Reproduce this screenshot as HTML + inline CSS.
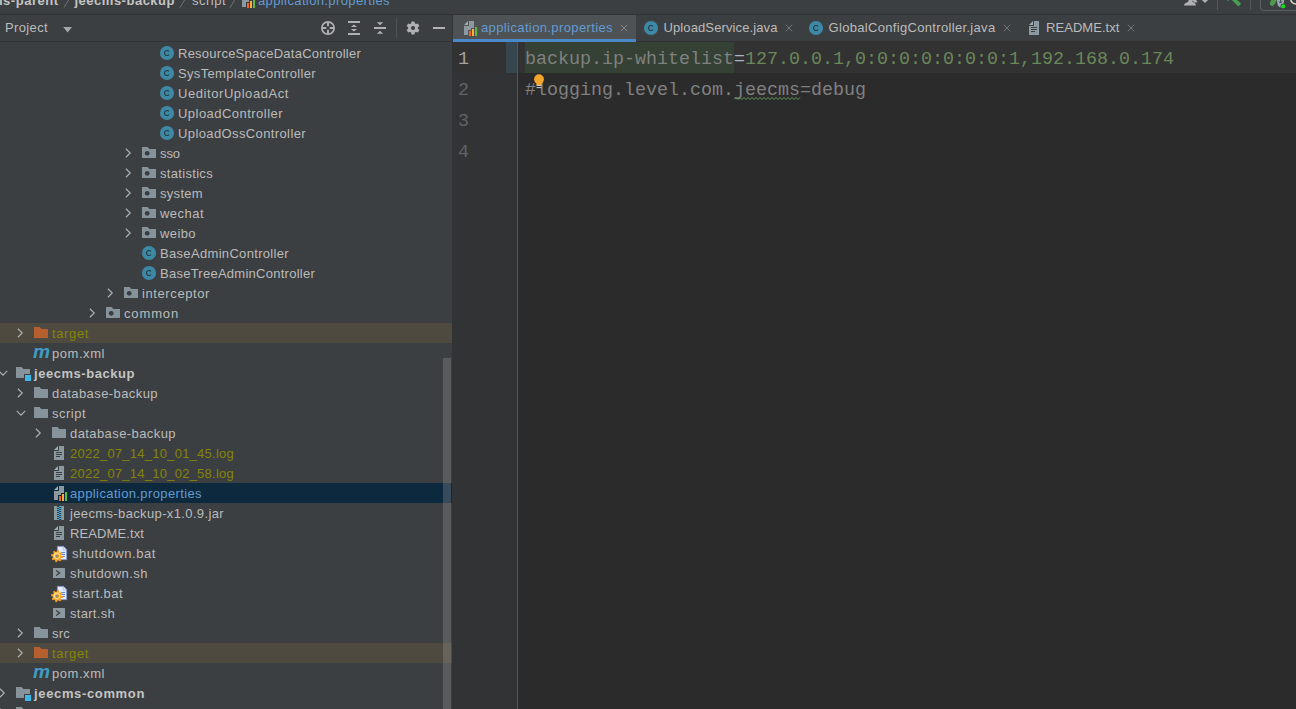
<!DOCTYPE html>
<html><head><meta charset="utf-8"><title>IDE</title>
<style>
html,body{margin:0;padding:0}
body{width:1296px;height:709px;overflow:hidden;background:#3c3f41;position:relative;font-family:"Liberation Sans",sans-serif;font-size:13px}
.t{position:absolute;white-space:pre;font-family:"Liberation Sans",sans-serif}
.m{position:absolute;white-space:pre;font-family:"Liberation Mono",monospace;font-size:18.333px;height:31px;line-height:31px;letter-spacing:0}
.i{position:absolute;overflow:visible;display:block}
.r{position:absolute;left:0;width:452px;height:20px}
#left{position:absolute;left:0;top:15px;width:452px;height:694px;background:#3c3f41;overflow:hidden}
#wrap{position:absolute;left:0;top:0;width:1296px;height:709px;overflow:hidden}
</style></head><body><div id="wrap">
<!-- editor area -->
<div style="position:absolute;left:452px;top:42px;width:844px;height:667px;background:#2b2b2b"></div>
<div style="position:absolute;left:452px;top:42px;width:65px;height:667px;background:#313335"></div>
<div style="position:absolute;left:517px;top:42px;width:1px;height:667px;background:#555555"></div>
<!-- top nav border -->
<div style="position:absolute;left:0;top:14px;width:1296px;height:1px;background:#2f3133"></div>
<!-- project toolbar border -->
<div style="position:absolute;left:0;top:41px;width:452px;height:1px;background:#323436"></div>
<div style="position:absolute;left:452px;top:15px;width:1px;height:27px;background:#323436"></div>
<!-- tab bar bottom border -->
<div style="position:absolute;left:453px;top:41px;width:843px;height:1px;background:#323232"></div>
<div class="t" style="left:-36.3px;top:-9.5px;height:20px;line-height:20px;font-size:13px;color:#c4c4c4;letter-spacing:0.511px;font-weight:bold;">jeecms-parent</div>
<div class="t" style="left:74.5px;top:-9.5px;height:20px;line-height:20px;font-size:13px;color:#c4c4c4;letter-spacing:0.505px;font-weight:bold;">jeecms-backup</div>
<div class="t" style="left:192px;top:-9.5px;height:20px;line-height:20px;font-size:13px;color:#bbbbbb;letter-spacing:0.490px;">script</div>
<div class="t" style="left:258px;top:-9.5px;height:20px;line-height:20px;font-size:13px;color:#629cd2;letter-spacing:0.383px;">application.properties</div>
<svg class="i" style="left:62.9px;top:-4px;" width="10" height="12" viewBox="0 0 10 12"><path d="M1 11.6 L8.03 0" stroke="#6f7375" stroke-width="1" fill="none"/></svg>
<svg class="i" style="left:179.4px;top:-4px;" width="10" height="12" viewBox="0 0 10 12"><path d="M1 11.6 L8.03 0" stroke="#6f7375" stroke-width="1" fill="none"/></svg>
<svg class="i" style="left:229.1px;top:-4px;" width="10" height="12" viewBox="0 0 10 12"><path d="M1 11.6 L8.03 0" stroke="#6f7375" stroke-width="1" fill="none"/></svg>
<svg class="i" style="left:242px;top:-7px;" width="14" height="16" viewBox="0 0 14 16"><path d="M5 0 H10 V14 H0 V5 H5 Z" fill="#8c99a1"/><path d="M4 0 V4 H0 Z" fill="#9eabb3"/><rect x="4" y="9" width="4" height="7" fill="#3c3f41"/><rect x="7" y="7" width="7" height="9" fill="#3c3f41"/><rect x="10" y="5" width="4" height="11" fill="#3c3f41"/><rect x="5" y="10" width="2" height="5" fill="#f26522"/><rect x="8" y="8" width="2" height="7" fill="#fbb03b"/><rect x="11" y="6" width="2.1" height="9" fill="#62b543"/></svg>
<div class="t" style="left:5px;top:18px;height:20px;line-height:20px;font-size:13px;color:#bbbbbb;letter-spacing:0.362px;">Project</div>
<svg class="i" style="left:63.3px;top:26.7px;" width="10" height="6" viewBox="0 0 10 6"><path d="M0.2 0 H9 L4.6 5.6 Z" fill="#a5a8aa"/></svg>
<svg class="i" style="left:321px;top:21px;" width="14" height="14" viewBox="0 0 14 14"><circle cx="7" cy="7" r="6.15" fill="none" stroke="#afb1b3" stroke-width="1.7"/><path d="M7 1 V5.3 M7 8.7 V13 M1 7 H5.3 M8.7 7 H13" stroke="#afb1b3" stroke-width="1.9"/></svg>
<svg class="i" style="left:348px;top:21px;" width="12" height="14" viewBox="0 0 12 14"><rect x="0" y="0" width="12" height="2" fill="#afb1b3"/><rect x="0" y="12" width="12" height="2" fill="#afb1b3"/><path d="M6 3.5 L9.1 6.1 H2.9 Z M6 10.5 L9.1 7.9 H2.9 Z" fill="#afb1b3"/></svg>
<svg class="i" style="left:374px;top:21px;" width="12" height="14" viewBox="0 0 12 14"><rect x="0" y="6" width="12" height="2" fill="#afb1b3"/><path d="M6 4.3 L9.2 1.3 H2.8 Z M6 9.7 L9.2 12.7 H2.8 Z" fill="#afb1b3"/></svg>
<div style="position:absolute;left:396px;top:18px;width:1px;height:20px;background:#515456"></div>
<svg class="i" style="left:406px;top:21px;" width="14" height="14" viewBox="0 0 14 14"><g transform="translate(7 7)"><path d="M-1.9 -4 L-1.45 -6.5 H1.45 L1.9 -4 Z" fill="#afb1b3" transform="rotate(0)"/><path d="M-1.9 -4 L-1.45 -6.5 H1.45 L1.9 -4 Z" fill="#afb1b3" transform="rotate(60)"/><path d="M-1.9 -4 L-1.45 -6.5 H1.45 L1.9 -4 Z" fill="#afb1b3" transform="rotate(120)"/><path d="M-1.9 -4 L-1.45 -6.5 H1.45 L1.9 -4 Z" fill="#afb1b3" transform="rotate(180)"/><path d="M-1.9 -4 L-1.45 -6.5 H1.45 L1.9 -4 Z" fill="#afb1b3" transform="rotate(240)"/><path d="M-1.9 -4 L-1.45 -6.5 H1.45 L1.9 -4 Z" fill="#afb1b3" transform="rotate(300)"/><circle r="4.9" fill="#afb1b3"/><circle r="2.05" fill="#3c3f41"/></g></svg>
<div style="position:absolute;left:433px;top:26.5px;width:12px;height:2px;background:#afb1b3"></div>
<svg class="i" style="left:160px;top:46px;" width="14" height="14" viewBox="0 0 14 14"><circle cx="7" cy="7" r="7.05" fill="#3d88a5"/><path d="M9.0 8.7 A2.55 2.55 0 1 1 9.0 5.3" fill="none" stroke="#263a44" stroke-width="1.1"/></svg>
<div class="t" style="left:178px;top:44px;height:20px;line-height:20px;font-size:13px;color:#bbbbbb;letter-spacing:0.248px;">ResourceSpaceDataController</div>
<svg class="i" style="left:160px;top:66px;" width="14" height="14" viewBox="0 0 14 14"><circle cx="7" cy="7" r="7.05" fill="#3d88a5"/><path d="M9.0 8.7 A2.55 2.55 0 1 1 9.0 5.3" fill="none" stroke="#263a44" stroke-width="1.1"/></svg>
<div class="t" style="left:178px;top:64px;height:20px;line-height:20px;font-size:13px;color:#bbbbbb;letter-spacing:0.344px;">SysTemplateController</div>
<svg class="i" style="left:160px;top:86px;" width="14" height="14" viewBox="0 0 14 14"><circle cx="7" cy="7" r="7.05" fill="#3d88a5"/><path d="M9.0 8.7 A2.55 2.55 0 1 1 9.0 5.3" fill="none" stroke="#263a44" stroke-width="1.1"/></svg>
<div class="t" style="left:178px;top:84px;height:20px;line-height:20px;font-size:13px;color:#bbbbbb;letter-spacing:0.569px;">UeditorUploadAct</div>
<svg class="i" style="left:160px;top:106px;" width="14" height="14" viewBox="0 0 14 14"><circle cx="7" cy="7" r="7.05" fill="#3d88a5"/><path d="M9.0 8.7 A2.55 2.55 0 1 1 9.0 5.3" fill="none" stroke="#263a44" stroke-width="1.1"/></svg>
<div class="t" style="left:178px;top:104px;height:20px;line-height:20px;font-size:13px;color:#bbbbbb;letter-spacing:0.465px;">UploadController</div>
<svg class="i" style="left:160px;top:126px;" width="14" height="14" viewBox="0 0 14 14"><circle cx="7" cy="7" r="7.05" fill="#3d88a5"/><path d="M9.0 8.7 A2.55 2.55 0 1 1 9.0 5.3" fill="none" stroke="#263a44" stroke-width="1.1"/></svg>
<div class="t" style="left:178px;top:124px;height:20px;line-height:20px;font-size:13px;color:#bbbbbb;letter-spacing:0.386px;">UploadOssController</div>
<svg class="i" style="left:124.3px;top:146.5px;" width="8" height="12" viewBox="0 0 8 12"><path d="M1.9 1.8 L6.2 6 L1.9 10.2" fill="none" stroke="#adb0b2" stroke-width="1.2"/></svg>
<svg class="i" style="left:142px;top:147px;" width="14" height="11" viewBox="0 0 14 11"><path d="M0 0 H5.6 L7.4 2 H14 V11 H0 Z" fill="#87939a"/><circle cx="5.2" cy="6.3" r="2.4" fill="#3a3d3f"/></svg>
<div class="t" style="left:160px;top:144px;height:20px;line-height:20px;font-size:13px;color:#bbbbbb;letter-spacing:-0.078px;">sso</div>
<svg class="i" style="left:124.3px;top:166.5px;" width="8" height="12" viewBox="0 0 8 12"><path d="M1.9 1.8 L6.2 6 L1.9 10.2" fill="none" stroke="#adb0b2" stroke-width="1.2"/></svg>
<svg class="i" style="left:142px;top:167px;" width="14" height="11" viewBox="0 0 14 11"><path d="M0 0 H5.6 L7.4 2 H14 V11 H0 Z" fill="#87939a"/><circle cx="5.2" cy="6.3" r="2.4" fill="#3a3d3f"/></svg>
<div class="t" style="left:160px;top:164px;height:20px;line-height:20px;font-size:13px;color:#bbbbbb;letter-spacing:0.316px;">statistics</div>
<svg class="i" style="left:124.3px;top:186.5px;" width="8" height="12" viewBox="0 0 8 12"><path d="M1.9 1.8 L6.2 6 L1.9 10.2" fill="none" stroke="#adb0b2" stroke-width="1.2"/></svg>
<svg class="i" style="left:142px;top:187px;" width="14" height="11" viewBox="0 0 14 11"><path d="M0 0 H5.6 L7.4 2 H14 V11 H0 Z" fill="#87939a"/><circle cx="5.2" cy="6.3" r="2.4" fill="#3a3d3f"/></svg>
<div class="t" style="left:160px;top:184px;height:20px;line-height:20px;font-size:13px;color:#bbbbbb;letter-spacing:0.305px;">system</div>
<svg class="i" style="left:124.3px;top:206.5px;" width="8" height="12" viewBox="0 0 8 12"><path d="M1.9 1.8 L6.2 6 L1.9 10.2" fill="none" stroke="#adb0b2" stroke-width="1.2"/></svg>
<svg class="i" style="left:142px;top:207px;" width="14" height="11" viewBox="0 0 14 11"><path d="M0 0 H5.6 L7.4 2 H14 V11 H0 Z" fill="#87939a"/><circle cx="5.2" cy="6.3" r="2.4" fill="#3a3d3f"/></svg>
<div class="t" style="left:160px;top:204px;height:20px;line-height:20px;font-size:13px;color:#bbbbbb;letter-spacing:0.466px;">wechat</div>
<svg class="i" style="left:124.3px;top:226.5px;" width="8" height="12" viewBox="0 0 8 12"><path d="M1.9 1.8 L6.2 6 L1.9 10.2" fill="none" stroke="#adb0b2" stroke-width="1.2"/></svg>
<svg class="i" style="left:142px;top:227px;" width="14" height="11" viewBox="0 0 14 11"><path d="M0 0 H5.6 L7.4 2 H14 V11 H0 Z" fill="#87939a"/><circle cx="5.2" cy="6.3" r="2.4" fill="#3a3d3f"/></svg>
<div class="t" style="left:160px;top:224px;height:20px;line-height:20px;font-size:13px;color:#bbbbbb;letter-spacing:0.406px;">weibo</div>
<svg class="i" style="left:142px;top:246px;" width="14" height="14" viewBox="0 0 14 14"><circle cx="7" cy="7" r="7.05" fill="#3d88a5"/><path d="M9.0 8.7 A2.55 2.55 0 1 1 9.0 5.3" fill="none" stroke="#263a44" stroke-width="1.1"/></svg>
<div class="t" style="left:160px;top:244px;height:20px;line-height:20px;font-size:13px;color:#bbbbbb;letter-spacing:0.324px;">BaseAdminController</div>
<svg class="i" style="left:142px;top:266px;" width="14" height="14" viewBox="0 0 14 14"><circle cx="7" cy="7" r="7.05" fill="#3d88a5"/><path d="M9.0 8.7 A2.55 2.55 0 1 1 9.0 5.3" fill="none" stroke="#263a44" stroke-width="1.1"/></svg>
<div class="t" style="left:160px;top:264px;height:20px;line-height:20px;font-size:13px;color:#bbbbbb;letter-spacing:0.257px;">BaseTreeAdminController</div>
<svg class="i" style="left:106.3px;top:286.5px;" width="8" height="12" viewBox="0 0 8 12"><path d="M1.9 1.8 L6.2 6 L1.9 10.2" fill="none" stroke="#adb0b2" stroke-width="1.2"/></svg>
<svg class="i" style="left:124px;top:287px;" width="14" height="11" viewBox="0 0 14 11"><path d="M0 0 H5.6 L7.4 2 H14 V11 H0 Z" fill="#87939a"/><circle cx="5.2" cy="6.3" r="2.4" fill="#3a3d3f"/></svg>
<div class="t" style="left:142px;top:284px;height:20px;line-height:20px;font-size:13px;color:#bbbbbb;letter-spacing:0.598px;">interceptor</div>
<svg class="i" style="left:88.3px;top:306.5px;" width="8" height="12" viewBox="0 0 8 12"><path d="M1.9 1.8 L6.2 6 L1.9 10.2" fill="none" stroke="#adb0b2" stroke-width="1.2"/></svg>
<svg class="i" style="left:106px;top:307px;" width="14" height="11" viewBox="0 0 14 11"><path d="M0 0 H5.6 L7.4 2 H14 V11 H0 Z" fill="#87939a"/><circle cx="5.2" cy="6.3" r="2.4" fill="#3a3d3f"/></svg>
<div class="t" style="left:124px;top:304px;height:20px;line-height:20px;font-size:13px;color:#bbbbbb;letter-spacing:0.857px;">common</div>
<div class="r" style="top:323px;background:#4e4a40"></div>
<svg class="i" style="left:16.3px;top:326.5px;" width="8" height="12" viewBox="0 0 8 12"><path d="M1.9 1.8 L6.2 6 L1.9 10.2" fill="none" stroke="#adb0b2" stroke-width="1.2"/></svg>
<svg class="i" style="left:34px;top:327px;" width="14" height="11" viewBox="0 0 14 11"><path d="M0 0 H5.6 L7.4 2 H14 V11 H0 Z" fill="#b5602e"/></svg>
<div class="t" style="left:52px;top:324px;height:20px;line-height:20px;font-size:13px;color:#848504;letter-spacing:0.625px;">target</div>
<svg class="i" style="left:32px;top:343px;" width="20" height="20" viewBox="0 0 20 20"><text x="1.0" y="15" font-family="Liberation Sans" font-size="19.2" font-weight="bold" font-style="italic" fill="#3f9cc4">m</text></svg>
<div class="t" style="left:52px;top:344px;height:20px;line-height:20px;font-size:13px;color:#bbbbbb;letter-spacing:0.554px;">pom.xml</div>
<svg class="i" style="left:-3px;top:368.5px;" width="12" height="8" viewBox="0 0 12 8"><path d="M1.8 1.9 L6 6.2 L10.2 1.9" fill="none" stroke="#adb0b2" stroke-width="1.2"/></svg>
<svg class="i" style="left:16px;top:367px;" width="16" height="15" viewBox="0 0 16 15"><path d="M0 0 H5.6 L7.4 2 H14 V11 H0 Z" fill="#87939a"/><rect x="8" y="7" width="8" height="8" fill="#3c3f41"/><rect x="9" y="8" width="6.1" height="6" fill="#40b6e8"/></svg>
<div class="t" style="left:34px;top:364px;height:20px;line-height:20px;font-size:13px;color:#c4c4c4;letter-spacing:0.543px;font-weight:bold;">jeecms-backup</div>
<svg class="i" style="left:16.3px;top:386.5px;" width="8" height="12" viewBox="0 0 8 12"><path d="M1.9 1.8 L6.2 6 L1.9 10.2" fill="none" stroke="#adb0b2" stroke-width="1.2"/></svg>
<svg class="i" style="left:34px;top:387px;" width="14" height="11" viewBox="0 0 14 11"><path d="M0 0 H5.6 L7.4 2 H14 V11 H0 Z" fill="#87939a"/></svg>
<div class="t" style="left:52px;top:384px;height:20px;line-height:20px;font-size:13px;color:#bbbbbb;letter-spacing:0.417px;">database-backup</div>
<svg class="i" style="left:14.5px;top:408.5px;" width="12" height="8" viewBox="0 0 12 8"><path d="M1.8 1.9 L6 6.2 L10.2 1.9" fill="none" stroke="#adb0b2" stroke-width="1.2"/></svg>
<svg class="i" style="left:34px;top:407px;" width="14" height="11" viewBox="0 0 14 11"><path d="M0 0 H5.6 L7.4 2 H14 V11 H0 Z" fill="#87939a"/></svg>
<div class="t" style="left:52px;top:404px;height:20px;line-height:20px;font-size:13px;color:#bbbbbb;letter-spacing:0.490px;">script</div>
<svg class="i" style="left:34.3px;top:426.5px;" width="8" height="12" viewBox="0 0 8 12"><path d="M1.9 1.8 L6.2 6 L1.9 10.2" fill="none" stroke="#adb0b2" stroke-width="1.2"/></svg>
<svg class="i" style="left:52px;top:427px;" width="14" height="11" viewBox="0 0 14 11"><path d="M0 0 H5.6 L7.4 2 H14 V11 H0 Z" fill="#87939a"/></svg>
<div class="t" style="left:70px;top:424px;height:20px;line-height:20px;font-size:13px;color:#bbbbbb;letter-spacing:0.417px;">database-backup</div>
<svg class="i" style="left:54px;top:446px;" width="10" height="14" viewBox="0 0 10 14"><path d="M5 0 H10 V14 H0 V5 H5 Z" fill="#8c99a1"/><path d="M4 0 V4 H0 Z" fill="#9eabb3"/><rect x="2" y="6" width="6" height="1" fill="#3c3f41"/><rect x="2" y="8" width="6" height="1" fill="#3c3f41"/><rect x="2" y="10" width="4" height="1" fill="#3c3f41"/></svg>
<div class="t" style="left:70px;top:444px;height:20px;line-height:20px;font-size:13px;color:#848504;letter-spacing:0.246px;">2022_07_14_10_01_45.log</div>
<svg class="i" style="left:54px;top:466px;" width="10" height="14" viewBox="0 0 10 14"><path d="M5 0 H10 V14 H0 V5 H5 Z" fill="#8c99a1"/><path d="M4 0 V4 H0 Z" fill="#9eabb3"/><rect x="2" y="6" width="6" height="1" fill="#3c3f41"/><rect x="2" y="8" width="6" height="1" fill="#3c3f41"/><rect x="2" y="10" width="4" height="1" fill="#3c3f41"/></svg>
<div class="t" style="left:70px;top:464px;height:20px;line-height:20px;font-size:13px;color:#848504;letter-spacing:0.246px;">2022_07_14_10_02_58.log</div>
<div class="r" style="top:483px;background:#0d293e"></div>
<svg class="i" style="left:54px;top:486px;" width="14" height="16" viewBox="0 0 14 16"><path d="M5 0 H10 V14 H0 V5 H5 Z" fill="#8c99a1"/><path d="M4 0 V4 H0 Z" fill="#9eabb3"/><rect x="4" y="9" width="4" height="7" fill="#0d293e"/><rect x="7" y="7" width="7" height="9" fill="#0d293e"/><rect x="10" y="5" width="4" height="11" fill="#0d293e"/><rect x="5" y="10" width="2" height="5" fill="#f26522"/><rect x="8" y="8" width="2" height="7" fill="#fbb03b"/><rect x="11" y="6" width="2.1" height="9" fill="#62b543"/></svg>
<div class="t" style="left:70px;top:484px;height:20px;line-height:20px;font-size:13px;color:#629cd2;letter-spacing:0.383px;">application.properties</div>
<svg class="i" style="left:54px;top:506px;" width="10" height="14" viewBox="0 0 10 14"><rect x="0" y="0" width="10" height="14" fill="#8c99a1"/><rect x="3" y="0" width="4.1" height="14" fill="#35383a"/><rect x="5" y="0" width="2.05" height="1" fill="#3fb4e0"/><rect x="3" y="1" width="2.05" height="1" fill="#3fb4e0"/><rect x="5" y="2" width="2.05" height="1" fill="#3fb4e0"/><rect x="3" y="3" width="2.05" height="1" fill="#3fb4e0"/><rect x="5" y="4" width="2.05" height="1" fill="#3fb4e0"/><rect x="3" y="5" width="2.05" height="1" fill="#3fb4e0"/><rect x="5" y="6" width="2.05" height="1" fill="#3fb4e0"/><rect x="3" y="7" width="2.05" height="1" fill="#3fb4e0"/><rect x="5" y="8" width="2.05" height="1" fill="#3fb4e0"/><rect x="3" y="9" width="2.05" height="1" fill="#3fb4e0"/><rect x="5" y="10" width="2.05" height="1" fill="#3fb4e0"/><rect x="3" y="11" width="2.05" height="1" fill="#3fb4e0"/><rect x="5" y="12" width="2.05" height="1" fill="#3fb4e0"/><rect x="3" y="13" width="2.05" height="1" fill="#3fb4e0"/></svg>
<div class="t" style="left:70px;top:504px;height:20px;line-height:20px;font-size:13px;color:#bbbbbb;letter-spacing:0.365px;">jeecms-backup-x1.0.9.jar</div>
<svg class="i" style="left:54px;top:526px;" width="10" height="14" viewBox="0 0 10 14"><path d="M5 0 H10 V14 H0 V5 H5 Z" fill="#8c99a1"/><path d="M4 0 V4 H0 Z" fill="#9eabb3"/><rect x="2" y="6" width="6" height="1" fill="#3c3f41"/><rect x="2" y="8" width="6" height="1" fill="#3c3f41"/><rect x="2" y="10" width="4" height="1" fill="#3c3f41"/></svg>
<div class="t" style="left:70px;top:524px;height:20px;line-height:20px;font-size:13px;color:#bbbbbb;letter-spacing:0.103px;">README.txt</div>
<svg class="i" style="left:51px;top:545px;" width="18" height="18" viewBox="0 0 18 18"><defs><linearGradient id="gg" x1="0" y1="0" x2="1" y2="1"><stop offset="0" stop-color="#ffd257"/><stop offset="1" stop-color="#f39314"/></linearGradient></defs><path d="M6.3 1.3 H12.4 L15.7 4.6 V14.7 H6.3 Z" fill="#e4edff" stroke="#6d83c8" stroke-width=".7"/><path d="M12.2 1.5 V4.8 H15.5 Z" fill="#f4f7ff" stroke="#7a8fd0" stroke-width=".5"/><rect x="10.4" y="6.9" width="3.8" height="1" fill="#5a7ad6"/><rect x="10.4" y="8.9" width="3.8" height="1" fill="#5a7ad6"/><rect x="10.4" y="10.9" width="3.4" height="1" fill="#5a7ad6"/><g transform="translate(6.1 11.1)"><path d="M-1.25 -3.6 L-0.95 -6 H0.95 L1.25 -3.6 Z" fill="#f6a21e" transform="rotate(10)"/><path d="M-1.25 -3.6 L-0.95 -6 H0.95 L1.25 -3.6 Z" fill="#f6a21e" transform="rotate(55)"/><path d="M-1.25 -3.6 L-0.95 -6 H0.95 L1.25 -3.6 Z" fill="#f6a21e" transform="rotate(100)"/><path d="M-1.25 -3.6 L-0.95 -6 H0.95 L1.25 -3.6 Z" fill="#f6a21e" transform="rotate(145)"/><path d="M-1.25 -3.6 L-0.95 -6 H0.95 L1.25 -3.6 Z" fill="#f6a21e" transform="rotate(190)"/><path d="M-1.25 -3.6 L-0.95 -6 H0.95 L1.25 -3.6 Z" fill="#f6a21e" transform="rotate(235)"/><path d="M-1.25 -3.6 L-0.95 -6 H0.95 L1.25 -3.6 Z" fill="#f6a21e" transform="rotate(280)"/><path d="M-1.25 -3.6 L-0.95 -6 H0.95 L1.25 -3.6 Z" fill="#f6a21e" transform="rotate(325)"/><circle r="4.3" fill="url(#gg)"/><circle r="2.7" fill="none" stroke="#ffe9a8" stroke-width=".9"/><circle r="1.6" fill="#c07a1a"/><circle r="0.9" fill="#7f9be0"/></g></svg>
<div class="t" style="left:72px;top:544px;height:20px;line-height:20px;font-size:13px;color:#bbbbbb;letter-spacing:0.555px;">shutdown.bat</div>
<svg class="i" style="left:53px;top:568px;" width="12" height="10" viewBox="0 0 12 10"><rect x="0" y="0" width="12" height="10" rx="0.3" fill="#8c99a1"/><path d="M3.1 2.5 L6.6 5 L3.1 7.5" fill="none" stroke="#3c3f41" stroke-width="1.4"/></svg>
<div class="t" style="left:70px;top:564px;height:20px;line-height:20px;font-size:13px;color:#bbbbbb;letter-spacing:0.455px;">shutdown.sh</div>
<svg class="i" style="left:51px;top:585px;" width="18" height="18" viewBox="0 0 18 18"><defs><linearGradient id="gg" x1="0" y1="0" x2="1" y2="1"><stop offset="0" stop-color="#ffd257"/><stop offset="1" stop-color="#f39314"/></linearGradient></defs><path d="M6.3 1.3 H12.4 L15.7 4.6 V14.7 H6.3 Z" fill="#e4edff" stroke="#6d83c8" stroke-width=".7"/><path d="M12.2 1.5 V4.8 H15.5 Z" fill="#f4f7ff" stroke="#7a8fd0" stroke-width=".5"/><rect x="10.4" y="6.9" width="3.8" height="1" fill="#5a7ad6"/><rect x="10.4" y="8.9" width="3.8" height="1" fill="#5a7ad6"/><rect x="10.4" y="10.9" width="3.4" height="1" fill="#5a7ad6"/><g transform="translate(6.1 11.1)"><path d="M-1.25 -3.6 L-0.95 -6 H0.95 L1.25 -3.6 Z" fill="#f6a21e" transform="rotate(10)"/><path d="M-1.25 -3.6 L-0.95 -6 H0.95 L1.25 -3.6 Z" fill="#f6a21e" transform="rotate(55)"/><path d="M-1.25 -3.6 L-0.95 -6 H0.95 L1.25 -3.6 Z" fill="#f6a21e" transform="rotate(100)"/><path d="M-1.25 -3.6 L-0.95 -6 H0.95 L1.25 -3.6 Z" fill="#f6a21e" transform="rotate(145)"/><path d="M-1.25 -3.6 L-0.95 -6 H0.95 L1.25 -3.6 Z" fill="#f6a21e" transform="rotate(190)"/><path d="M-1.25 -3.6 L-0.95 -6 H0.95 L1.25 -3.6 Z" fill="#f6a21e" transform="rotate(235)"/><path d="M-1.25 -3.6 L-0.95 -6 H0.95 L1.25 -3.6 Z" fill="#f6a21e" transform="rotate(280)"/><path d="M-1.25 -3.6 L-0.95 -6 H0.95 L1.25 -3.6 Z" fill="#f6a21e" transform="rotate(325)"/><circle r="4.3" fill="url(#gg)"/><circle r="2.7" fill="none" stroke="#ffe9a8" stroke-width=".9"/><circle r="1.6" fill="#c07a1a"/><circle r="0.9" fill="#7f9be0"/></g></svg>
<div class="t" style="left:72px;top:584px;height:20px;line-height:20px;font-size:13px;color:#bbbbbb;letter-spacing:0.448px;">start.bat</div>
<svg class="i" style="left:53px;top:608px;" width="12" height="10" viewBox="0 0 12 10"><rect x="0" y="0" width="12" height="10" rx="0.3" fill="#8c99a1"/><path d="M3.1 2.5 L6.6 5 L3.1 7.5" fill="none" stroke="#3c3f41" stroke-width="1.4"/></svg>
<div class="t" style="left:70px;top:604px;height:20px;line-height:20px;font-size:13px;color:#bbbbbb;letter-spacing:0.297px;">start.sh</div>
<svg class="i" style="left:16.3px;top:626.5px;" width="8" height="12" viewBox="0 0 8 12"><path d="M1.9 1.8 L6.2 6 L1.9 10.2" fill="none" stroke="#adb0b2" stroke-width="1.2"/></svg>
<svg class="i" style="left:34px;top:627px;" width="14" height="11" viewBox="0 0 14 11"><path d="M0 0 H5.6 L7.4 2 H14 V11 H0 Z" fill="#87939a"/></svg>
<div class="t" style="left:52px;top:624px;height:20px;line-height:20px;font-size:13px;color:#bbbbbb;letter-spacing:0.219px;">src</div>
<div class="r" style="top:643px;background:#4e4a40"></div>
<svg class="i" style="left:16.3px;top:646.5px;" width="8" height="12" viewBox="0 0 8 12"><path d="M1.9 1.8 L6.2 6 L1.9 10.2" fill="none" stroke="#adb0b2" stroke-width="1.2"/></svg>
<svg class="i" style="left:34px;top:647px;" width="14" height="11" viewBox="0 0 14 11"><path d="M0 0 H5.6 L7.4 2 H14 V11 H0 Z" fill="#b5602e"/></svg>
<div class="t" style="left:52px;top:644px;height:20px;line-height:20px;font-size:13px;color:#848504;letter-spacing:0.625px;">target</div>
<svg class="i" style="left:32px;top:663px;" width="20" height="20" viewBox="0 0 20 20"><text x="1.0" y="15" font-family="Liberation Sans" font-size="19.2" font-weight="bold" font-style="italic" fill="#3f9cc4">m</text></svg>
<div class="t" style="left:52px;top:664px;height:20px;line-height:20px;font-size:13px;color:#bbbbbb;letter-spacing:0.554px;">pom.xml</div>
<svg class="i" style="left:-1.7px;top:686.5px;" width="8" height="12" viewBox="0 0 8 12"><path d="M1.9 1.8 L6.2 6 L1.9 10.2" fill="none" stroke="#adb0b2" stroke-width="1.2"/></svg>
<svg class="i" style="left:16px;top:687px;" width="16" height="15" viewBox="0 0 16 15"><path d="M0 0 H5.6 L7.4 2 H14 V11 H0 Z" fill="#87939a"/><rect x="8" y="7" width="8" height="8" fill="#3c3f41"/><rect x="9" y="8" width="6.1" height="6" fill="#40b6e8"/></svg>
<div class="t" style="left:34px;top:684px;height:20px;line-height:20px;font-size:13px;color:#c4c4c4;letter-spacing:0.647px;font-weight:bold;">jeecms-common</div>
<svg class="i" style="left:-1.7px;top:706.5px;" width="8" height="12" viewBox="0 0 8 12"><path d="M1.9 1.8 L6.2 6 L1.9 10.2" fill="none" stroke="#adb0b2" stroke-width="1.2"/></svg>
<svg class="i" style="left:16px;top:707px;" width="16" height="15" viewBox="0 0 16 15"><path d="M0 0 H5.6 L7.4 2 H14 V11 H0 Z" fill="#87939a"/><rect x="8" y="7" width="8" height="8" fill="#3c3f41"/><rect x="9" y="8" width="6.1" height="6" fill="#40b6e8"/></svg>
<div class="t" style="left:34px;top:704px;height:20px;line-height:20px;font-size:13px;color:#c4c4c4;letter-spacing:0.470px;font-weight:bold;">jeecms-component</div>
<!-- scrollbar thumb -->
<div style="position:absolute;left:443px;top:358px;width:8px;height:360px;background:rgba(166,166,166,.28)"></div>
<div style="position:absolute;left:453px;top:15px;width:183px;height:24px;background:#4e5254"></div>
<div style="position:absolute;left:453px;top:39px;width:183px;height:3px;background:#4a88c7"></div>
<svg class="i" style="left:464px;top:21px;" width="14" height="16" viewBox="0 0 14 16"><path d="M5 0 H10 V14 H0 V5 H5 Z" fill="#8c99a1"/><path d="M4 0 V4 H0 Z" fill="#9eabb3"/><rect x="4" y="9" width="4" height="7" fill="#4e5254"/><rect x="7" y="7" width="7" height="9" fill="#4e5254"/><rect x="10" y="5" width="4" height="11" fill="#4e5254"/><rect x="5" y="10" width="2" height="5" fill="#f26522"/><rect x="8" y="8" width="2" height="7" fill="#fbb03b"/><rect x="11" y="6" width="2.1" height="9" fill="#62b543"/></svg>
<div class="t" style="left:481px;top:18px;height:20px;line-height:20px;font-size:13px;color:#629cd2;letter-spacing:0.383px;">application.properties</div>
<svg class="i" style="left:620px;top:24px;" width="8" height="8" viewBox="0 0 8 8"><path d="M0.8 0.8 L7.2 7.2 M7.2 0.8 L0.8 7.2" stroke="#84888a" stroke-width="1" fill="none"/></svg>
<svg class="i" style="left:644px;top:21px;" width="14" height="14" viewBox="0 0 14 14"><circle cx="7" cy="7" r="7.05" fill="#3d88a5"/><path d="M9.0 8.7 A2.55 2.55 0 1 1 9.0 5.3" fill="none" stroke="#263a44" stroke-width="1.1"/></svg>
<div class="t" style="left:663.5px;top:18px;height:20px;line-height:20px;font-size:13px;color:#bbbbbb;letter-spacing:0.110px;">UploadService.java</div>
<svg class="i" style="left:784.5px;top:24px;" width="8" height="8" viewBox="0 0 8 8"><path d="M0.8 0.8 L7.2 7.2 M7.2 0.8 L0.8 7.2" stroke="#717577" stroke-width="1" fill="none"/></svg>
<svg class="i" style="left:809px;top:21px;" width="14" height="14" viewBox="0 0 14 14"><circle cx="7" cy="7" r="7.05" fill="#3d88a5"/><path d="M9.0 8.7 A2.55 2.55 0 1 1 9.0 5.3" fill="none" stroke="#263a44" stroke-width="1.1"/></svg>
<div class="t" style="left:828.5px;top:18px;height:20px;line-height:20px;font-size:13px;color:#bbbbbb;letter-spacing:0.323px;">GlobalConfigController.java</div>
<svg class="i" style="left:1003px;top:24px;" width="8" height="8" viewBox="0 0 8 8"><path d="M0.8 0.8 L7.2 7.2 M7.2 0.8 L0.8 7.2" stroke="#717577" stroke-width="1" fill="none"/></svg>
<svg class="i" style="left:1029px;top:21px;" width="10" height="14" viewBox="0 0 10 14"><path d="M5 0 H10 V14 H0 V5 H5 Z" fill="#8c99a1"/><path d="M4 0 V4 H0 Z" fill="#9eabb3"/><rect x="2" y="6" width="6" height="1" fill="#3c3f41"/><rect x="2" y="8" width="6" height="1" fill="#3c3f41"/><rect x="2" y="10" width="4" height="1" fill="#3c3f41"/></svg>
<div class="t" style="left:1046px;top:18px;height:20px;line-height:20px;font-size:13px;color:#bbbbbb;letter-spacing:0.053px;">README.txt</div>
<svg class="i" style="left:1127px;top:24px;" width="8" height="8" viewBox="0 0 8 8"><path d="M0.8 0.8 L7.2 7.2 M7.2 0.8 L0.8 7.2" stroke="#717577" stroke-width="1" fill="none"/></svg>
<svg class="i" style="left:1183px;top:0px;" width="16" height="7" viewBox="0 0 16 7"><path d="M0.9 5.6 C0.9 3.6 2.6 3.0 4.4 2.2 C5.4 1.7 5.6 0.9 5.6 0 H9.0 C9.0 0.9 9.3 1.7 10.3 2.2 C12.1 3.0 12.9 3.6 12.9 5.6 Z" fill="#aeb0b2"/><path d="M8.6 0 H13.2 L14.6 2.2 L11.5 2.4 Z" fill="#aeb0b2"/></svg>
<svg class="i" style="left:1201px;top:0px;" width="8" height="4" viewBox="0 0 8 4"><path d="M0.9 0 H7.1 L4 2.9 Z" fill="#aeb0b2"/></svg>
<div style="position:absolute;left:1217px;top:0;width:1px;height:10px;background:#55585a"></div>
<svg class="i" style="left:1226px;top:0px;" width="18" height="8" viewBox="0 0 18 8"><path d="M7.0 -1.5 L13.8 5.2" stroke="#499c54" stroke-width="3.8" fill="none"/><rect x="1.4" y="0" width="1.4" height="0.9" fill="#499c54"/></svg>
<div style="position:absolute;left:1250px;top:0;width:1px;height:10px;background:#55585a"></div>
<div style="position:absolute;left:1260px;top:-10px;width:60px;height:21px;border:1px solid #5e6163;border-radius:3.5px;box-sizing:border-box"></div>
<svg class="i" style="left:1268px;top:0px;" width="20" height="10" viewBox="0 0 20 10"><ellipse cx="5.3" cy="1.6" rx="2.6" ry="4.6" transform="rotate(32 5.3 1.6)" fill="#4f9a4a"/><path d="M4.2 5 L5.4 6.6" stroke="#4f8a4a" stroke-width=".8"/><path d="M8.6 -1 L9.8 5.4 L12.4 7.8 L15.4 6 L16.3 -1 Z" fill="#9ba8b1"/><path d="M10.9 1.6 A2.1 2.1 0 0 0 14.3 1.6" stroke="#3c3f41" stroke-width="1" fill="none"/><rect x="12.1" y="0" width="1" height="2.4" fill="#3c3f41"/><circle cx="15.2" cy="6.3" r="2.7" fill="#3c3f41"/><circle cx="15.2" cy="6.3" r="2.1" fill="#10e016"/></svg>
<svg class="i" style="left:1289px;top:0px;" width="8" height="6" viewBox="0 0 8 6"><path d="M1.6 -2 C1.6 2 3.8 4 8 4" stroke="#d9d2c6" stroke-width="1.5" fill="none"/></svg>
<div style="position:absolute;left:518px;top:42px;width:778px;height:31px;background:#323232"></div>
<div style="position:absolute;left:453px;top:42px;width:53px;height:31px;background:#323232"></div>
<div style="position:absolute;left:506px;top:42px;width:11px;height:31px;background:#35464f"></div>
<div style="position:absolute;left:525px;top:42px;width:209px;height:31px;background:#344134"></div>
<div class="m" style="left:525px;top:44px;color:#808080;">backup.ip-whitelist</div>
<div class="m" style="left:734px;top:44px;color:#a9b7c6;">=</div>
<div class="m" style="left:745px;top:44px;color:#6a8759;">127.0.0.1,0:0:0:0:0:0:0:1,192.168.0.174</div>
<div class="m" style="left:525px;top:75px;color:#808080;">#logging.level.com.jeecms=debug</div>
<div class="m" style="left:458px;top:44px;color:#a4a3a3;">1</div>
<div class="m" style="left:458px;top:75px;color:#606366;">2</div>
<div class="m" style="left:458px;top:106px;color:#606366;">3</div>
<div class="m" style="left:458px;top:137px;color:#606366;">4</div>
<svg class="i" style="left:734px;top:97px;" width="66" height="3" viewBox="0 0 66 3"><path d="M0 2 L2 0.4 L4 2.6 L6 0.4 L8 2.6 L10 0.4 L12 2.6 L14 0.4 L16 2.6 L18 0.4 L20 2.6 L22 0.4 L24 2.6 L26 0.4 L28 2.6 L30 0.4 L32 2.6 L34 0.4 L36 2.6 L38 0.4 L40 2.6 L42 0.4 L44 2.6 L46 0.4 L48 2.6 L50 0.4 L52 2.6 L54 0.4 L56 2.6 L58 0.4 L60 2.6 L62 0.4 L64 2.6 L66 0.4" stroke="#5f9a5c" stroke-width=".9" fill="none"/></svg>
<svg class="i" style="left:533px;top:73px;" width="12" height="17" viewBox="0 0 12 17"><circle cx="6" cy="6.2" r="4.9" fill="#f2a62a"/><rect x="3.4" y="10" width="5.2" height="2" fill="#f2a62a"/><rect x="3.5" y="12" width="5" height="1" fill="#c9ccd0"/><rect x="3.5" y="14.1" width="5" height="1" fill="#c9ccd0"/></svg>
</div></body></html>
